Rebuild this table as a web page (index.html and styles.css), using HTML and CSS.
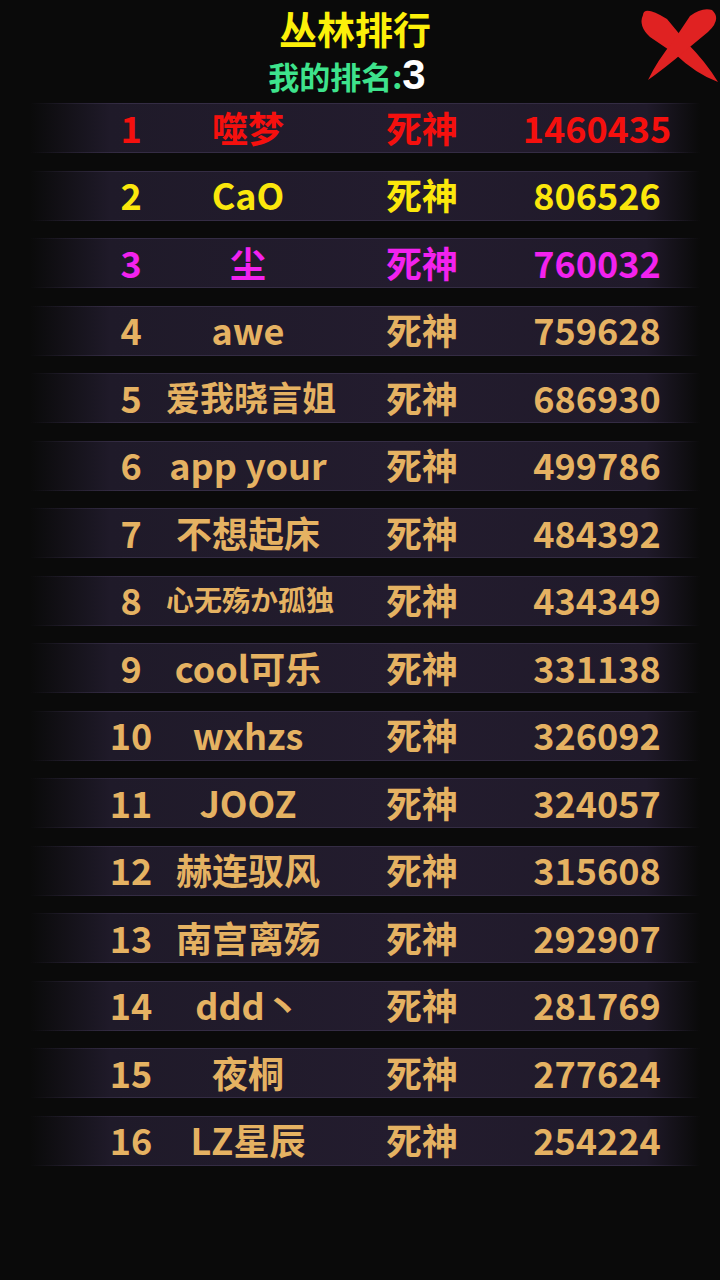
FILE: index.html
```html
<!DOCTYPE html>
<html>
<head>
    <meta charset="utf-8">
    <title>丛林排行</title>
    <link rel="stylesheet" href="styles.css">
</head>
<body>
    <div class="page">
        <div class="header">
            <h1 class="title">丛林排行</h1>
            <div class="my-rank">我的排名:<span class="my-rank-num">3</span></div>
            <svg class="close" viewBox="0 0 90 90" width="90" height="90">
                <path fill="#e02222" d="M13 15 Q14 5 37 19 L56 42 Q76 62 88 82 Q66 74 45 54 L20 37 Q8 26 13 15 Z"/>
                <path fill="#e02222" d="M82 10 Q92 19 78 32 L55 51 Q35 68 18 80 Q27 61 44 40 L60 16 Q72 7 82 10 Z"/>
            </svg>
        </div>

        <div class="board">
            <div class="row first"><span class="rank">1</span><span class="name">噬梦</span><span class="job">死神</span><span class="score">1460435</span></div>
            <div class="row second"><span class="rank">2</span><span class="name">CaO</span><span class="job">死神</span><span class="score">806526</span></div>
            <div class="row third"><span class="rank">3</span><span class="name">尘</span><span class="job">死神</span><span class="score">760032</span></div>
            <div class="row"><span class="rank">4</span><span class="name">awe</span><span class="job">死神</span><span class="score">759628</span></div>
            <div class="row"><span class="rank">5</span><span class="name name-md">爱我晓言姐</span><span class="job">死神</span><span class="score">686930</span></div>
            <div class="row"><span class="rank">6</span><span class="name">app your</span><span class="job">死神</span><span class="score">499786</span></div>
            <div class="row"><span class="rank">7</span><span class="name">不想起床</span><span class="job">死神</span><span class="score">484392</span></div>
            <div class="row"><span class="rank">8</span><span class="name name-sm">心无殇か孤独</span><span class="job">死神</span><span class="score">434349</span></div>
            <div class="row"><span class="rank">9</span><span class="name">cool可乐</span><span class="job">死神</span><span class="score">331138</span></div>
            <div class="row"><span class="rank">10</span><span class="name">wxhzs</span><span class="job">死神</span><span class="score">326092</span></div>
            <div class="row"><span class="rank">11</span><span class="name">JOOZ</span><span class="job">死神</span><span class="score">324057</span></div>
            <div class="row"><span class="rank">12</span><span class="name">赫连驭风</span><span class="job">死神</span><span class="score">315608</span></div>
            <div class="row"><span class="rank">13</span><span class="name">南宫离殇</span><span class="job">死神</span><span class="score">292907</span></div>
            <div class="row"><span class="rank">14</span><span class="name">ddd丶</span><span class="job">死神</span><span class="score">281769</span></div>
            <div class="row"><span class="rank">15</span><span class="name">夜桐</span><span class="job">死神</span><span class="score">277624</span></div>
            <div class="row"><span class="rank">16</span><span class="name">LZ星辰</span><span class="job">死神</span><span class="score">254224</span></div>
        </div>
    </div>
</body>
</html>
```

FILE: styles.css
```css
body {
    margin: 0;
    background-color: #0a0a0a;
    font-family: "Noto Sans CJK SC", "Noto Sans", sans-serif;
    font-weight: 700;
}

.page {
    width: 720px;
    height: 1280px;
}

.header {
    position: relative;
    text-align: center;
}

.title {
    margin: 0;
    padding: 8px 10px 0 0;
    font-size: 38px;
    line-height: 40px;
    color: #fcf00a;
}

.my-rank {
    margin-top: 8px;
    padding-right: 26px;
    font-size: 31px;
    line-height: 38px;
    color: #3ee38c;
}

.my-rank-num {
    display: inline-block;
    font-family: "Liberation Sans", Arial, sans-serif;
    font-size: 42px;
    line-height: 38px;
    color: #ffffff;
}

.close {
    position: absolute;
    top: 0;
    right: 0;
}

.board {
    display: flex;
    flex-direction: column;
    gap: 17.5px;
    margin: 8px 20px 0 30px;
}

.row {
    display: grid;
    grid-template-columns: 70px 164px 184px 166px;
    align-items: center;
    box-sizing: border-box;
    height: 50px;
    padding: 0 0 3px 66px;
    font-size: 36px;
    line-height: 46px;
    color: #e5b262;
    white-space: nowrap;
    background:
        linear-gradient(to right, rgba(52, 44, 68, 0), #342c44 14%, #342c44 90%, rgba(52, 44, 68, 0)) top / 100% 1px no-repeat,
        linear-gradient(to right, rgba(52, 44, 68, 0), #342c44 14%, #342c44 90%, rgba(52, 44, 68, 0)) bottom / 100% 1px no-repeat,
        linear-gradient(to right, rgba(33, 27, 44, 0), #1f1a29 12%, #231c2e 55%, #201a2a 92%, rgba(31, 25, 40, 0));
}

.row span {
    text-align: center;
}

.name-md {
    font-size: 34px;
}

.name-sm {
    font-size: 28px;
}

.first {
    color: #f5100e;
}

.second {
    color: #fbe70c;
}

.third {
    color: #f222ee;
}
```
